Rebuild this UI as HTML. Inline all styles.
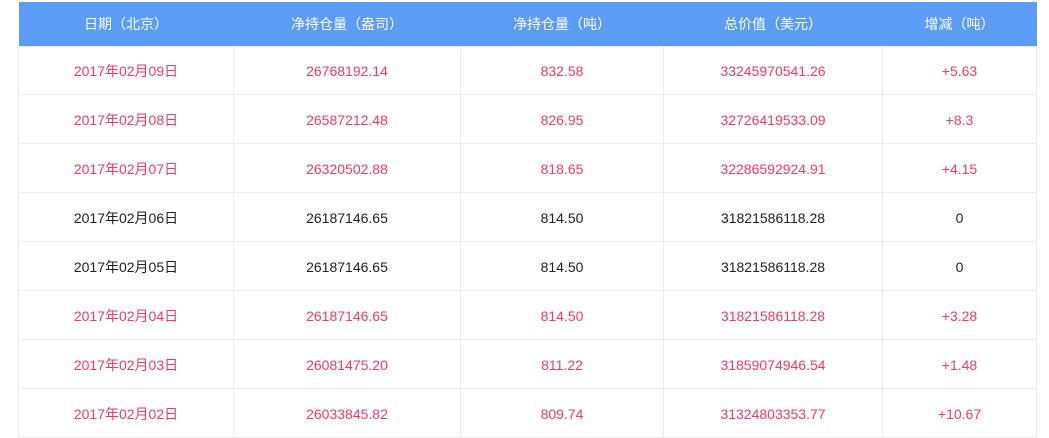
<html><head><style>
body{margin:0;background:#fff;width:1049px;height:425px;overflow:hidden;font-family:"Liberation Sans","Noto Sans CJK SC",sans-serif;}
table{position:absolute;left:18px;top:2px;border-collapse:collapse;width:1018px;table-layout:fixed;font-size:14px;}
th{background:#5a9cf6;color:#fff;font-weight:normal;height:44px;padding:0;}
td{height:49px;padding:2px 0 0 0;box-sizing:border-box;text-align:center;border:1px solid #ebebeb;color:#ee3d61;}
tr.f td{height:48px;}
tr.b td{color:#222;}
</style></head><body>
<table>
<colgroup><col style="width:215px"><col style="width:227px"><col style="width:203px"><col style="width:219px"><col style="width:154px"></colgroup>
<tr><th>日期（北京）</th><th>净持仓量（盎司）</th><th>净持仓量（吨）</th><th>总价值（美元）</th><th>增减（吨）</th></tr>
<tr class="f"><td>2017年02月09日</td><td>26768192.14</td><td>832.58</td><td>33245970541.26</td><td>+5.63</td></tr>
<tr><td>2017年02月08日</td><td>26587212.48</td><td>826.95</td><td>32726419533.09</td><td>+8.3</td></tr>
<tr><td>2017年02月07日</td><td>26320502.88</td><td>818.65</td><td>32286592924.91</td><td>+4.15</td></tr>
<tr class="b"><td>2017年02月06日</td><td>26187146.65</td><td>814.50</td><td>31821586118.28</td><td>0</td></tr>
<tr class="b"><td>2017年02月05日</td><td>26187146.65</td><td>814.50</td><td>31821586118.28</td><td>0</td></tr>
<tr><td>2017年02月04日</td><td>26187146.65</td><td>814.50</td><td>31821586118.28</td><td>+3.28</td></tr>
<tr><td>2017年02月03日</td><td>26081475.20</td><td>811.22</td><td>31859074946.54</td><td>+1.48</td></tr>
<tr><td>2017年02月02日</td><td>26033845.82</td><td>809.74</td><td>31324803353.77</td><td>+10.67</td></tr>
</table>
</body></html>
